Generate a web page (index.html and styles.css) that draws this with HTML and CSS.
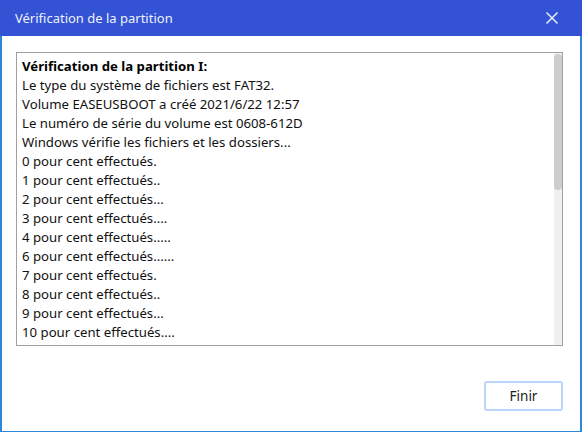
FILE: index.html
```html
<!DOCTYPE html>
<html lang="fr">
<head>
<meta charset="UTF-8" />
<meta name="viewport" content="width=device-width, initial-scale=1.0" />
<title>Vérification de la partition</title>
<link rel="stylesheet" href="styles.css">
</head>
<body>
<div class="window">
    <div class="title-bar">
        <span class="title">Vérification de la partition</span>
        <svg class="close" width="14" height="14" viewBox="0 0 14 14">
            <path d="M1.5 1.5 L12.5 12.5 M12.5 1.5 L1.5 12.5" stroke="#e3e8f8" stroke-width="1.6" fill="none"/>
        </svg>
    </div>
    <div class="body">
        <div class="log">
            <div class="log-text">
                <div class="line bold">Vérification de la partition I:</div>
                <div class="line">Le type du système de fichiers est FAT32.</div>
                <div class="line">Volume EASEUSBOOT a créé 2021/6/22 12:57</div>
                <div class="line">Le numéro de série du volume est 0608-612D</div>
                <div class="line">Windows vérifie les fichiers et les dossiers...</div>
                <div class="line">0 pour cent effectués.</div>
                <div class="line">1 pour cent effectués..</div>
                <div class="line">2 pour cent effectués...</div>
                <div class="line">3 pour cent effectués....</div>
                <div class="line">4 pour cent effectués.....</div>
                <div class="line">6 pour cent effectués......</div>
                <div class="line">7 pour cent effectués.</div>
                <div class="line">8 pour cent effectués..</div>
                <div class="line">9 pour cent effectués...</div>
                <div class="line">10 pour cent effectués....</div>
            </div>
            <div class="scrollbar"><div class="thumb"></div></div>
        </div>
        <div class="actions">
            <button class="btn">Finir</button>
        </div>
    </div>
</div>
</body>
</html>
```

FILE: styles.css
```css
* {
    box-sizing: border-box;
    margin: 0;
    padding: 0;
}
body {
    background: #fff;
    font-family: "Segoe UI", "Noto Sans", sans-serif;
    color: #000;
}
.window {
    width: 582px;
    height: 432px;
    border: 2px solid #2b88d8;
    border-top: none;
    border-bottom-width: 1px;
    background: #fff;
}
.title-bar {
    height: 36px;
    margin: 0 -2px;
    background: #3352d4;
    display: flex;
    align-items: center;
    justify-content: space-between;
    padding: 0 23px 0 15px;
}
.title {
    color: #eef1fb;
    font-size: 13px;
}
.close {
    display: block;
}
.body {
    padding: 16px 17px 0 14px;
}
.log {
    height: 294px;
    border: 1px solid #a0a0a0;
    display: flex;
}
.log-text {
    flex: 1;
    padding: 4px 0 0 5px;
    font-size: 13.2px;
    line-height: 19px;
    color: #111;
}
.line {
    white-space: nowrap;
}
.bold {
    font-weight: 700;
    color: #000;
}
.scrollbar {
    width: 8px;
    background: #f0f0f0;
    padding-top: 1px;
}
.thumb {
    height: 136px;
    background: #cdcdcd;
    border-radius: 4px;
}
.actions {
    display: flex;
    justify-content: flex-end;
    margin-top: 35px;
}
.btn {
    width: 79px;
    height: 30px;
    background: #fff;
    border: 2px solid #bcd6f9;
    border-radius: 3px;
    font-family: inherit;
    font-size: 13.5px;
    color: #1a1a1a;
}
```
